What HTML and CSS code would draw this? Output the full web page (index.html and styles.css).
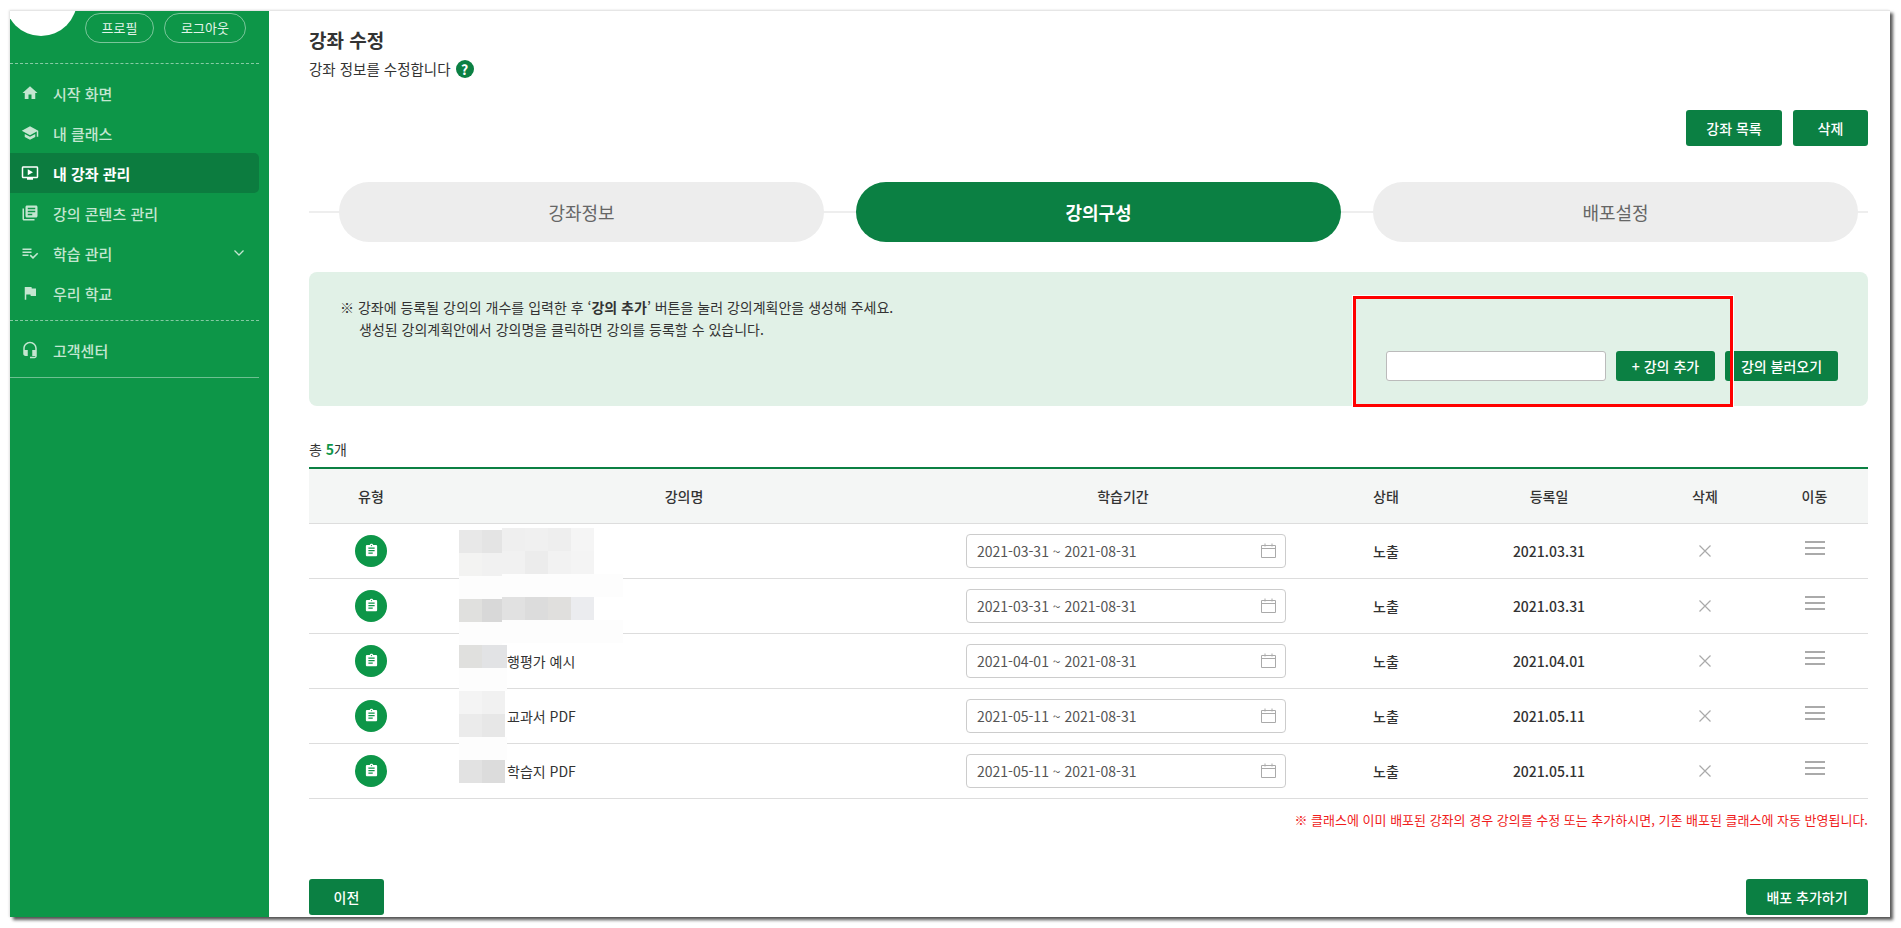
FILE: index.html
```html
<!DOCTYPE html>
<html lang="ko">
<head>
<meta charset="utf-8">
<title>강좌 수정</title>
<link rel="stylesheet" href="styles.css">
</head>
<body>

<svg class="sprite" xmlns="http://www.w3.org/2000/svg">
	<symbol id="i-clip" viewBox="0 0 24 24"><path fill-rule="evenodd" d="M19 3h-4.18C14.4 1.84 13.3 1 12 1c-1.3 0-2.4.84-2.82 2H5c-1.1 0-2 .9-2 2v14c0 1.1.9 2 2 2h14c1.1 0 2-.9 2-2V5c0-1.1-.9-2-2-2zm-7 0c.55 0 1 .45 1 1s-.45 1-1 1-1-.45-1-1 .45-1 1-1zm2 14H7v-2h7v2zm3-4H7v-2h10v2zm0-4H7V7h10v2z"/></symbol>
	<symbol id="i-cal" viewBox="0 0 15 15"><path fill="none" stroke="currentColor" d="M.5 2.5h14v12H.5zM.5 5.5h14M4 .5v3M11 .5v3"/></symbol>
	<symbol id="i-x" viewBox="0 0 12 12"><path fill="none" stroke="currentColor" stroke-width="1.2" d="M.5.5l11 11M11.5.5l-11 11"/></symbol>
	<symbol id="i-move" viewBox="0 0 20 14"><path d="M0 0h20v2H0zM0 6h20v2H0zM0 12h20v2H0z"/></symbol>
</svg>

<div class="window">

	<div class="side">
		<div class="user">
			<div class="avatar"></div>
			<a class="pill pill-a">프로필</a>
			<a class="pill pill-b">로그아웃</a>
		</div>

		<ul class="menu">
			<li><svg viewBox="0 0 24 24"><path d="M10 20v-6h4v6h5v-8h3L12 3 2 12h3v8z"/></svg>시작 화면</li>
			<li><svg viewBox="0 0 24 24"><path d="M5 13.18v4L12 21l7-3.82v-4L12 17l-7-3.82zM12 3L1 9l11 6 9-4.91V17h2V9L12 3z"/></svg>내 클래스</li>
			<li class="on"><svg viewBox="0 0 24 24"><path d="M21 3H3c-1.11 0-2 .89-2 2v12c0 1.1.89 2 2 2h5v2h8v-2h5c1.1 0 1.99-.9 1.99-2L23 5c0-1.11-.9-2-2-2zm0 14H3V5h18v12zM16 11l-7 4V7z"/></svg>내 강좌 관리</li>
			<li><svg viewBox="0 0 24 24"><path d="M4 6H2v14c0 1.1.9 2 2 2h14v-2H4V6zm16-4H8c-1.1 0-2 .9-2 2v12c0 1.1.9 2 2 2h12c1.1 0 2-.9 2-2V4c0-1.1-.9-2-2-2zm-1 9H9V9h10v2zm-4 4H9v-2h6v2zm4-8H9V5h10v2z"/></svg>강의 콘텐츠 관리</li>
			<li><svg viewBox="0 0 24 24"><path d="M14 10H2v2h12v-2zm0-4H2v2h12V6zM2 16h8v-2H2v2zm19.5-4.5L23 13l-6.99 7-4.51-4.5L13 14l3.01 3 5.49-5.5z"/></svg>학습 관리<svg class="chev" viewBox="0 0 10 6"><path fill="none" stroke="currentColor" stroke-width="1.3" d="M.5.5L5 5 9.500.5"/></svg></li>
			<li><svg viewBox="0 0 24 24"><path d="M14.4 6L14 4H5v17h2v-7h5.600l.4 2h7V6z"/></svg>우리 학교</li>
		</ul>

		<ul class="menu menu-last">
			<li><svg viewBox="0 0 24 24"><path d="M12 1c-4.970 0-9 4.030-9 9v7c0 1.660 1.340 3 3 3h3v-8H5v-2c0-3.870 3.130-7 7-7s7 3.130 7 7v2h-4v8h4v1h-7v2h6c1.660 0 3-1.340 3-3V10c0-4.970-4.030-9-9-9z"/></svg>고객센터</li>
		</ul>
	</div>

	<div class="main">
		<h1>강좌 수정</h1>
		<p class="sub">강좌 정보를 수정합니다 <span class="help">?</span></p>

		<div class="top-btns">
			<a class="btn btn-list">강좌 목록</a>
			<a class="btn btn-del">삭제</a>
		</div>

		<div class="tabs">
			<div class="tab">강좌정보</div>
			<div class="tab on">강의구성</div>
			<div class="tab">배포설정</div>
		</div>

		<div class="notice">
			<div class="notice-text">
				<p>※ 강좌에 등록될 강의의 개수를 입력한 후 ‘<b>강의 추가</b>’ 버튼을 눌러 강의계획안을 생성해 주세요.</p>
				<p class="ind">생성된 강의계획안에서 강의명을 클릭하면 강의를 등록할 수 있습니다.</p>
			</div>
			<div class="notice-form">
				<input type="text" class="count">
				<a class="btn btn-sm btn-add">+ 강의 추가</a>
				<a class="btn btn-sm btn-load">강의 불러오기</a>
			</div>
			<div class="redbox"></div>
		</div>

		<div class="total">총 <b>5</b>개</div>

		<div class="list">
			<table>
				<thead>
					<tr><th class="c1">유형</th><th class="c2">강의명</th><th class="c3">학습기간</th><th class="c4">상태</th><th class="c5">등록일</th><th class="c6">삭제</th><th class="c7">이동</th></tr>
				</thead>
				<tbody>
					<tr>
						<td><span class="type"><svg><use href="#i-clip"/></svg></span></td>
						<td class="name"></td>
						<td><div class="date">2021-03-31 ~ 2021-08-31<svg><use href="#i-cal"/></svg></div></td>
						<td>노출</td><td>2021.03.31</td>
						<td><svg class="del"><use href="#i-x"/></svg></td>
						<td class="c7"><svg class="move"><use href="#i-move"/></svg></td>
					</tr>
					<tr>
						<td><span class="type"><svg><use href="#i-clip"/></svg></span></td>
						<td class="name"></td>
						<td><div class="date">2021-03-31 ~ 2021-08-31<svg><use href="#i-cal"/></svg></div></td>
						<td>노출</td><td>2021.03.31</td>
						<td><svg class="del"><use href="#i-x"/></svg></td>
						<td class="c7"><svg class="move"><use href="#i-move"/></svg></td>
					</tr>
					<tr>
						<td><span class="type"><svg><use href="#i-clip"/></svg></span></td>
						<td class="name">행평가 예시</td>
						<td><div class="date">2021-04-01 ~ 2021-08-31<svg><use href="#i-cal"/></svg></div></td>
						<td>노출</td><td>2021.04.01</td>
						<td><svg class="del"><use href="#i-x"/></svg></td>
						<td class="c7"><svg class="move"><use href="#i-move"/></svg></td>
					</tr>
					<tr>
						<td><span class="type"><svg><use href="#i-clip"/></svg></span></td>
						<td class="name">교과서 PDF</td>
						<td><div class="date">2021-05-11 ~ 2021-08-31<svg><use href="#i-cal"/></svg></div></td>
						<td>노출</td><td>2021.05.11</td>
						<td><svg class="del"><use href="#i-x"/></svg></td>
						<td class="c7"><svg class="move"><use href="#i-move"/></svg></td>
					</tr>
					<tr>
						<td><span class="type"><svg><use href="#i-clip"/></svg></span></td>
						<td class="name">학습지 PDF</td>
						<td><div class="date">2021-05-11 ~ 2021-08-31<svg><use href="#i-cal"/></svg></div></td>
						<td>노출</td><td>2021.05.11</td>
						<td><svg class="del"><use href="#i-x"/></svg></td>
						<td class="c7"><svg class="move"><use href="#i-move"/></svg></td>
					</tr>
				</tbody>
			</table>

			<!-- mosaic that hides the lecture names, origin is x459 y528 -->
			<svg class="mosaic" width="164" height="255" viewBox="459 528 164 255">
				<rect x="459" y="530" width="23" height="23" fill="#e8e8e8"/>
				<rect x="482" y="530" width="20" height="23" fill="#e4e4e4"/>
				<rect x="502" y="528" width="23" height="23" fill="#efefef"/>
				<rect x="525" y="528" width="23" height="23" fill="#f0f0f0"/>
				<rect x="548" y="528" width="23" height="23" fill="#eeeeee"/>
				<rect x="571" y="528" width="23" height="23" fill="#f5f5f5"/>
				<rect x="459" y="553" width="23" height="23" fill="#f3f3f2"/>
				<rect x="482" y="553" width="20" height="23" fill="#f1f1f1"/>
				<rect x="502" y="551" width="23" height="23" fill="#f1f1f1"/>
				<rect x="525" y="551" width="23" height="23" fill="#ececec"/>
				<rect x="548" y="551" width="23" height="23" fill="#f2f2f2"/>
				<rect x="571" y="551" width="23" height="23" fill="#f4f4f4"/>
				<rect x="459" y="576" width="43" height="23" fill="#fdfdfd"/>
				<rect x="502" y="574" width="121" height="23" fill="#fdfdfd"/>
				<rect x="459" y="599" width="23" height="23" fill="#e0e0de"/>
				<rect x="482" y="599" width="20" height="23" fill="#d8d8d8"/>
				<rect x="502" y="597" width="23" height="23" fill="#e1e1e1"/>
				<rect x="525" y="597" width="23" height="23" fill="#dcdcdc"/>
				<rect x="548" y="597" width="23" height="23" fill="#e0dfdd"/>
				<rect x="571" y="597" width="23" height="23" fill="#ebecef"/>
				<rect x="459" y="622" width="43" height="23" fill="#fdfdfd"/>
				<rect x="502" y="620" width="121" height="23" fill="#fdfdfd"/>
				<rect x="459" y="645" width="23" height="23" fill="#e0e0de"/>
				<rect x="482" y="645" width="25" height="23" fill="#e2e3e5"/>
				<rect x="459" y="668" width="48" height="23" fill="#fdfdfd"/>
				<rect x="459" y="691" width="23" height="23" fill="#f4f4f4"/>
				<rect x="482" y="691" width="23" height="23" fill="#f1f1f1"/>
				<rect x="459" y="714" width="23" height="23" fill="#ebebeb"/>
				<rect x="482" y="714" width="23" height="23" fill="#e7e7e7"/>
				<rect x="459" y="737" width="48" height="23" fill="#fdfdfd"/>
				<rect x="459" y="760" width="23" height="23" fill="#e2e2e2"/>
				<rect x="482" y="760" width="23" height="23" fill="#dcdcdc"/>
			</svg>
		</div>

		<p class="warn">※ 클래스에 이미 배포된 강좌의 경우 강의를 수정 또는 추가하시면, 기존 배포된 클래스에 자동 반영됩니다.</p>

		<div class="bottom-btns">
			<a class="btn btn-prev">이전</a>
			<a class="btn btn-next">배포 추가하기</a>
		</div>
	</div>

</div>

</body>
</html>
```

FILE: styles.css
```css
* {
	box-sizing: border-box;
}

html, body {
	height: 100%;
}

body {
	margin: 0;
	padding: 10px 11px 11px 10px;
	background-color: #fff;
	font-family: "Noto Sans CJK KR", "Noto Sans", sans-serif;
	font-size: 14px;
	color: #333;
	overflow: hidden;
}

p, h1, ul {
	margin: 0;
	padding: 0;
}

.sprite {
	display: none;
}

.window {
	display: flex;
	width: 1880px;
	height: 907px;
	background-color: #fff;
	border-top: 1px solid #e6e6e6;
	box-shadow: 3px 3px 3px rgba(0,0,0,.65), -1px 0 2px rgba(0,0,0,.12);
	overflow: hidden;
}

/* left nav */

.side {
	flex: 0 0 259px;
	padding-right: 10px;
	margin-top: -1px;
	background-color: #0d9648;
	color: #c4e6d1;
	font-size: 15px;
}

.user {
	display: flex;
	align-items: flex-start;
	height: 54px;
	border-bottom: 1px dashed rgba(255,255,255,.5);
}

.avatar {
	flex: none;
	width: 72px;
	height: 72px;
	margin: -46px 0 0 -5px;
	border-radius: 50%;
	background-color: #fff;
}

.pill {
	height: 30px;
	margin-top: 3px;
	border: 1px solid rgba(255,255,255,.45);
	border-radius: 15px;
	font-size: 13px;
	line-height: 28px;
	text-align: center;
	color: #e4f4ea;
}

.pill-a {
	width: 69px;
	margin-left: 8px;
}

.pill-b {
	width: 82px;
	margin-left: 10px;
}

.menu {
	list-style: none;
	padding: 9px 0 7px;
	border-bottom: 1px dashed rgba(255,255,255,.5);
}

.menu-last {
	border-bottom: 1px solid rgba(255,255,255,.4);
}

.menu li {
	display: flex;
	align-items: center;
	height: 40px;
	padding-left: 11px;
	font-weight: 500;
}

.menu li svg {
	flex: none;
	width: 18px;
	height: 18px;
	margin-right: 14px;
	fill: currentColor;
}

.menu li.on {
	background-color: #0c7c3f;
	border-radius: 0 5px 5px 0;
	color: #fff;
	font-weight: 700;
}

.menu li svg.chev {
	width: 10px;
	height: 6px;
	margin: 0 15px 0 auto;
	fill: none;
}

/* content */

.main {
	flex: 1;
	min-width: 0;
	padding: 16px 22px 0 40px;
}

h1 {
	font-size: 19px;
	line-height: 26px;
	font-weight: 700;
}

.sub {
	margin-top: 6px;
	line-height: 20px;
	font-size: 14.500px;
}

.help {
	display: inline-block;
	width: 18px;
	height: 18px;
	margin-left: 1px;
	border-radius: 50%;
	background-color: #0b8043;
	color: #fff;
	font-size: 14px;
	font-weight: 700;
	line-height: 18px;
	text-align: center;
	vertical-align: top;
	margin-top: 1px;
}

.btn {
	display: block;
	height: 36px;
	background-color: #0b8043;
	border-radius: 3px;
	color: #fff;
	font-weight: 500;
	line-height: 36px;
	text-align: center;
}

.top-btns {
	display: flex;
	justify-content: flex-end;
	gap: 11px;
	margin-top: 31px;
}

.btn-list {
	width: 96px;
}

.btn-del {
	width: 75px;
}

.tabs {
	display: flex;
	gap: 32px;
	height: 60px;
	margin-top: 36px;
	padding: 0 10px 0 30px;
	background: linear-gradient(#eee, #eee) 0 29px / 100% 2px no-repeat;
}

.tab {
	width: 485px;
	border-radius: 30px;
	background-color: #ededed;
	color: #666;
	font-size: 18px;
	line-height: 60px;
	text-align: center;
}

.tab.on {
	background-color: #0b8043;
	color: #fff;
	font-weight: 700;
}

.notice {
	position: relative;
	display: flex;
	justify-content: space-between;
	align-items: flex-end;
	height: 134px;
	margin-top: 30px;
	padding: 24px 30px 25px 31px;
	background-color: #e1f1e7;
	border-radius: 8px;
}

.notice-text {
	align-self: flex-start;
	line-height: 22px;
}

.notice-text b {
	font-weight: 700;
}

.ind {
	padding-left: 19px;
}

.notice-form {
	display: flex;
	gap: 8px;
}

.count {
	width: 220px;
	height: 30px;
	padding: 0 8px;
	background-color: #fff;
	border: 1px solid #bbb;
	border-radius: 3px;
}

.btn-sm {
	height: 30px;
	line-height: 30px;
	font-size: 14px;
}

.btn-add {
	width: 99px;
	margin-left: 2px;
}

.btn-load {
	width: 113px;
	margin-left: 2px;
}

/* annotation box drawn over the form */
.redbox {
	position: absolute;
	left: 1044px;
	top: 24px;
	width: 380px;
	height: 111px;
	border: 3px solid #f00;
	outline: 1px solid #fff;
}

.total {
	margin-top: 33px;
	line-height: 20px;
}

.total b {
	color: #0d9648;
	font-weight: 700;
}

/* table */

.list {
	position: relative;
	margin-top: 8px;
	border-top: 2px solid #0b8043;
}

table {
	width: 100%;
	border-collapse: collapse;
	table-layout: fixed;
}

th {
	height: 54px;
	padding: 0;
	background-color: #f4f6f5;
	border-bottom: 1px solid #ddd;
	font-weight: 500;
}

td {
	height: 55px;
	padding: 0;
	border-bottom: 1px solid #ddd;
	text-align: center;
	font-weight: 500;
}

.c1 { width: 124px; }
.c2 { width: 502px; }
.c3 { width: 376px; }
.c4 { width: 150px; }
.c5 { width: 176px; }
.c6 { width: 136px; }
.c7 { width: 95px; padding-right: 12px; }

.type {
	display: flex;
	align-items: center;
	justify-content: center;
	width: 32px;
	height: 32px;
	margin: 0 auto 0 46px;
	border-radius: 50%;
	background-color: #0d9648;
}

.type svg {
	width: 15px;
	height: 15px;
	fill: #fff;
}

td.name {
	padding-left: 74px;
	text-align: left;
	font-weight: 400;
}

.date {
	display: flex;
	align-items: center;
	justify-content: space-between;
	width: 320px;
	height: 34px;
	margin-left: 31px;
	padding: 0 9px 0 10px;
	border: 1px solid #ccc;
	border-radius: 4px;
	color: #555;
	font-weight: 400;
}

.date svg {
	width: 15px;
	height: 15px;
	color: #aaa;
}

.del {
	display: block;
	width: 12px;
	height: 12px;
	margin: 0 auto;
	color: #aaa;
}

.move {
	display: block;
	width: 20px;
	height: 14px;
	margin: -6px auto 0;
	fill: #aaa;
}

.mosaic {
	position: absolute;
	left: 150px;
	top: 59px;
}

.warn {
	margin-top: 11px;
	line-height: 20px;
	font-size: 13px;
	text-align: right;
	color: #f01c1c;
}

.bottom-btns {
	display: flex;
	justify-content: space-between;
	margin-top: 49px;
}

.btn-prev {
	width: 75px;
}

.btn-next {
	width: 122px;
}
```
